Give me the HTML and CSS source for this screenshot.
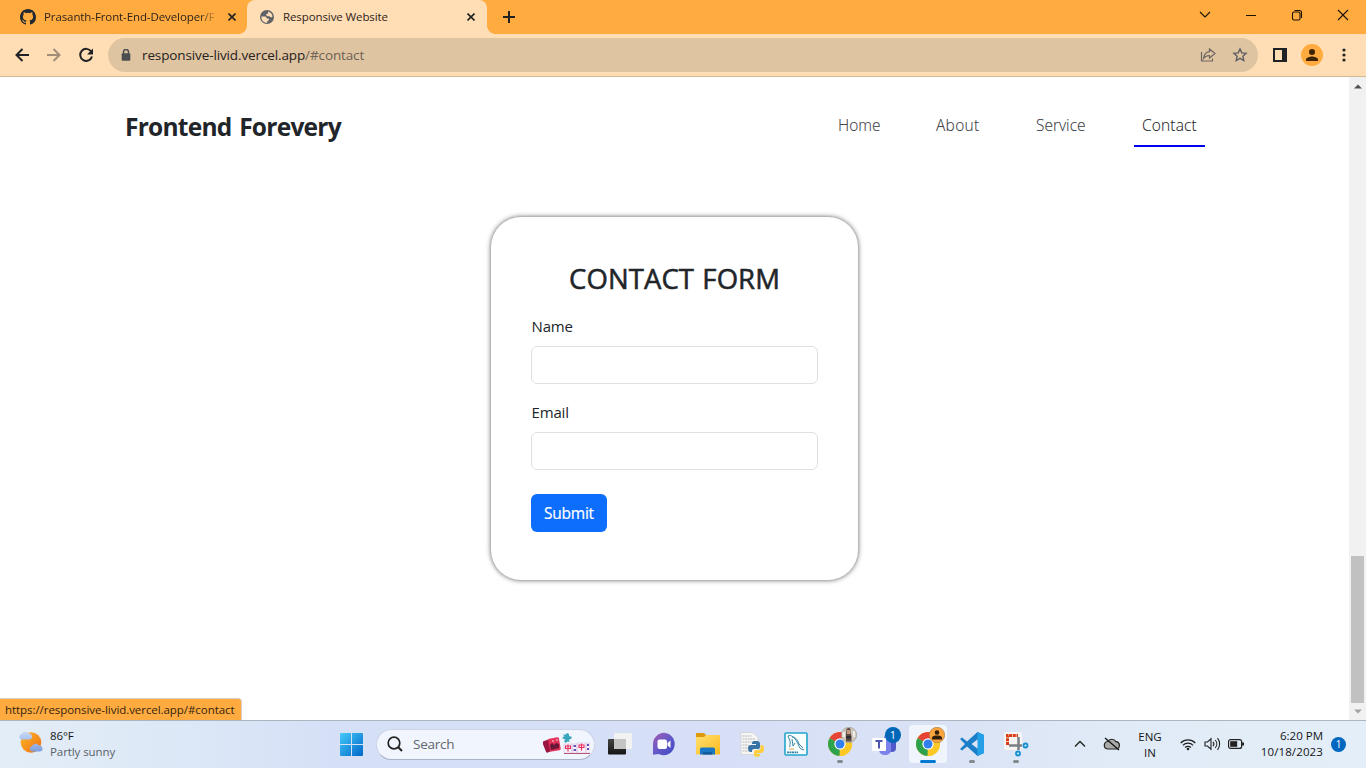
FILE: index.html
```html
<!DOCTYPE html>
<html lang="en">
<head>
<meta charset="utf-8">
<title>Responsive Website</title>
<link rel="stylesheet" href="styles.css">
</head>
<body>
<div class="tabs">
  <div class="tab">
    <svg class="fav" viewBox="0 0 16 16"><path fill="#24292f" d="M8 0C3.58 0 0 3.58 0 8c0 3.54 2.29 6.53 5.47 7.59.4.07.55-.17.55-.38 0-.19-.01-.82-.01-1.49-2.01.37-2.53-.49-2.69-.94-.09-.23-.48-.94-.82-1.13-.28-.15-.68-.52-.01-.53.63-.01 1.08.58 1.23.82.72 1.21 1.87.87 2.33.66.07-.52.28-.87.51-1.07-1.78-.2-3.64-.89-3.64-3.95 0-.87.31-1.59.82-2.15-.08-.2-.36-1.02.08-2.12 0 0 .67-.21 2.2.82a7.600 7.600 0 0 1 4 0c1.530-1.040 2.200-.82 2.200-.82.44 1.100.16 1.920.08 2.120.51.56.82 1.270.82 2.150 0 3.070-1.870 3.750-3.650 3.950.29.25.54.73.54 1.480 0 1.070-.01 1.930-.01 2.200 0 .21.15.46.55.38A8.010 8.010 0 0 0 16 8c0-4.420-3.580-8-8-8z"/></svg>
    <span class="title fade">Prasanth-Front-End-Developer/F</span>
    <svg class="x" viewBox="0 0 8 8"><path d="M.5.5l7 7M7.500.5l-7 7"/></svg>
  </div>
  <div class="tab active">
    <svg class="fav globe" viewBox="0 0 24 24"><circle cx="12" cy="12" r="12" fill="#5f6368"/><path fill="#ffddb5" d="M2.500 11h6c3 0 2.500 4 5 4h2v2c-1 1-3 1-3 3v1.800C6 22 1.800 17 2.500 11zM14 2.500c4 1 7 4.500 7.500 8.500-2 2.500-4 1.500-5-.5h-3.500c-2 0-3-2-2-3.500 1-1 3 0 3-2z"/></svg>
    <span class="title second">Responsive Website</span>
    <svg class="x" viewBox="0 0 8 8"><path d="M.5.5l7 7M7.500.5l-7 7"/></svg>
  </div>
  <svg class="plus" viewBox="0 0 12 12"><path d="M6 0v12M0 6h12" stroke="#222" stroke-width="2"/></svg>
  <svg class="wins" viewBox="0 0 150 14" fill="none" stroke="#1c1304" stroke-width="1.100"><path d="M1 4l5 5 5-5M47 7.500h10M139 2l10 10M149 2l-10 10"/><rect x="93.500" y="4" width="7.500" height="8" rx="1.500"/><path d="M95.500 2.500h5q2 0 2 2V10"/></svg>
</div>
<div class="toolbar">
  <svg class="navs" viewBox="0 0 80 16" fill="none" stroke="#202124" stroke-width="2"><path d="M15 8H2.500M8.500 2L2.500 8l6 6"/><path stroke="#a28e78" d="M33 8h12.500M39.500 2l6 6-6 6"/><path d="M77.200 4.500A6 6 0 1 0 78 9.500"/><path fill="#202124" stroke="none" d="M79 1.500v6h-6z"/></svg>
  <div class="omni">
    <svg class="lock" viewBox="0 0 10 12"><path fill="none" stroke="#4b4d51" stroke-width="1.500" d="M2.500 5V3a2.500 2.500 0 0 1 5 0v2"/><rect x=".7" y="4.300" width="8.600" height="7.400" rx="1" fill="#4b4d51"/></svg>
    <span class="url">responsive-livid.vercel.app<span class="path">/#contact</span></span>
    <svg class="share" viewBox="0 0 16 16" fill="none" stroke="#6b6560" stroke-width="1.200"><path d="M1.500 5v9h11v-2.500"/><path d="M9.500 2l5.500 4.500-5.500 4.500V8.500C6.500 8.500 5 9.500 3.500 11.500 4 7.500 6 5 9.500 4.600z"/></svg>
    <svg class="star" viewBox="0 0 16 16" fill="none" stroke="#5f6063" stroke-width="1.400"><path d="M8 1.900l1.800 4 4.300.4-3.200 2.900.9 4.300-3.800-2.200-3.800 2.200.9-4.300-3.200-2.900 4.300-.4z"/></svg>
  </div>
  <svg class="side" viewBox="0 0 14 14"><path fill="#202124" fill-rule="evenodd" d="M0 0h14v14H0zM2 2v10h7V2z"/></svg>
  <svg class="avatar" viewBox="0 0 22 22"><circle cx="11" cy="11" r="11" fill="#ffab40"/><circle cx="11" cy="8" r="3" fill="#3c2405"/><path fill="#3c2405" d="M5 17v-1.500c0-2 4-3 6-3s6 1 6 3V17z"/></svg>
  <svg class="dots" viewBox="0 0 4 14" fill="#202124"><circle cx="2" cy="2" r="1.600"/><circle cx="2" cy="7" r="1.600"/><circle cx="2" cy="12" r="1.600"/></svg>
</div>
<div class="view">
  <main class="page">
    <header class="header">
      <h1 class="brand">Frontend Forevery</h1>
      <nav class="menu"><a class="home">Home</a><a class="about">About</a><a class="service">Service</a><a class="contact">Contact</a></nav>
    </header>
    <form class="card">
      <h2 class="heading">CONTACT FORM</h2>
      <label class="label">Name</label>
      <input class="input" type="text">
      <label class="label">Email</label>
      <input class="input" type="text">
      <button class="submit" type="button">Submit</button>
    </form>
  </main>
  <div class="scroll">
    <svg class="arrow" viewBox="0 0 8 5"><path fill="#505050" d="M0 4.500L4 .5l4 4z"/></svg>
    <div class="thumb"></div>
    <svg class="arrow" viewBox="0 0 8 5"><path fill="#a3a3a3" d="M0 .5h8l-4 4z"/></svg>
  </div>
  <div class="status">https://responsive-livid.vercel.app/#contact</div>
</div>
<footer class="taskbar">
  <svg class="weather" viewBox="0 0 26 24"><defs><linearGradient id="sun" x2="1" y2="1"><stop stop-color="#fbb929"/><stop offset="1" stop-color="#ee6d12"/></linearGradient><linearGradient id="cl" x2="0" y2="1"><stop stop-color="#c8d9f8"/><stop offset="1" stop-color="#7f9fdb"/></linearGradient></defs><circle cx="13" cy="12.500" r="10.300" fill="url(#sun)"/><path fill="url(#cl)" d="M3.500 9.500a2.800 2.800 0 0 1 0-5.500 4 4 0 0 1 7-.5 3 3 0 0 1 1 6zM14 21.500a2.800 2.800 0 0 1 0-5.500 4 4 0 0 1 7-.5 3 3 0 0 1 1 6z"/></svg>
  <div class="temp"><span class="deg">86°F</span><span class="sky">Partly sunny</span></div>
  <svg class="start" viewBox="0 0 23 23"><defs><linearGradient id="win" x2="1" y2="1"><stop stop-color="#45cafa"/><stop offset="1" stop-color="#0067c8"/></linearGradient></defs><path fill="url(#win)" d="M0 1q0-1 1-1h10v11H0zM12 0h10q1 0 1 1v10H12zM0 12h11v11H1q-1 0-1-1zM12 12h11v10q0 1-1 1H12z"/></svg>
  <div class="search">
    <svg class="mag" viewBox="0 0 16 16" fill="none" stroke="#222"><circle cx="7" cy="7" r="5.800" stroke-width="1.700"/><path stroke-width="2" d="M11 11l4 4"/></svg>
    <span class="hint">Search</span>
    <svg class="games" viewBox="0 0 47 24"><rect x="1" y="8" width="9" height="12" rx="1.500" fill="#9b1742" transform="rotate(-22 5 14)"/><rect x="6" y="6" width="11" height="13" rx="1.500" fill="#df3159" transform="rotate(-10 11 13)"/><path d="M7 13l2-2 2 2 2-2 3 1v4l-8 2z" fill="#681635"/><path d="M9 9h2M13 8h2" stroke="#ffd4d4"/><path d="M20 2l2 1 2-2 2 1v2l3 1-1 2-2 .5.5 2.500-2-.5-2 1.500-1.500-2 1.500-1.500-3-1 .5-2 1.500.5z" fill="#39a7bb"/><g stroke="#d4bfe1" stroke-width=".6"><path fill="#faf2fb" d="M21 12h8v9h-8zM29 12h5v9h-5zM34 11h9v10h-9zM43 11h4v10h-4z"/></g><path d="M21 21.500h26" stroke="#b55674"/><path d="M22.500 14h5v2.500h-5zM25 12.500v7M36 13h5v2.500h-5zM38.500 11.500v7" fill="none" stroke="#e72d58" stroke-width="1.100"/><path d="M30.500 14h2.500M30.500 18h2.500M44 13h2M44 17h2" stroke="#6451b3" stroke-width="1.800"/></svg>
  </div>
  <div class="apps">
    <div class="app"><svg viewBox="0 0 24 24"><defs><linearGradient id="dk" x2="0" y2="1"><stop stop-color="#444"/><stop offset="1" stop-color="#151515"/></linearGradient></defs><rect y="7" width="18" height="15.500" rx="1" fill="url(#dk)"/><rect x="6" y="1" width="18" height="16" rx="1" fill="#f2f2f2"/><path fill="#c4c4c4" d="M6 7h12v10H6z"/></svg></div>
    <div class="app"><svg viewBox="0 0 24 24"><defs><linearGradient id="vi" x2="1" y2="1"><stop stop-color="#a45db4"/><stop offset=".5" stop-color="#6559c7"/><stop offset="1" stop-color="#3e48c4"/></linearGradient></defs><path fill="url(#vi)" d="M12 .8A11.200 11.200 0 1 1 6.500 22L1 22.800V12A11.200 11.200 0 0 1 12 .8z"/><rect x="5.500" y="7.500" width="9.500" height="9.500" rx="2" fill="#fff"/><path fill="#fff" d="M15.500 11l3-2.500v7.500l-3-2.500z"/></svg></div>
    <div class="app"><svg viewBox="0 0 24 24"><defs><linearGradient id="fo" x2="1" y2="1"><stop stop-color="#ffe071"/><stop offset="1" stop-color="#fbbb1e"/></linearGradient></defs><path fill="#dd980c" d="M0 2q0-1 1-1h7l2 2h13v4H0z"/><path fill="url(#fo)" d="M0 5h8l2-2h13q1 0 1 1v18.500H0z"/><path fill="#1977c4" d="M4 22.500V17q0-1.500 1.500-1.500h12Q19 15.500 19 17v5.500z"/><path fill="#0f5b9d" d="M7 20h9v2.500H7z"/></svg></div>
    <div class="app"><svg viewBox="0 0 24 24"><path fill="#f5f5f5" stroke="#c9c9c9" stroke-width=".6" d="M1 .5h12l5 5v17H1z"/><path stroke="#bbb" stroke-dasharray="2 .6" d="M2.500 4h9M2.500 7h13M2.500 10h9M2.500 13h6M2.500 16h6M2.500 19h8"/><path fill="#3872a4" d="M14 9h3q3 0 3 3v3q0 2-2 2h-4q-2 0-2 2v1h-1q-3 0-3-4 0-3 3-3h5v-1h-4v-1q0-2 2-2z"/><path fill="#ffce3d" d="M20.500 13h1q2.500 0 2.500 4t-3 4h-4v1h3v1q0 1.800-3 1.800t-3-2V20q0-2 2-2h3q1.500 0 1.500-2z"/></svg></div>
    <div class="app"><svg viewBox="0 0 24 24"><rect x="1" y="1" width="22" height="22" rx="1" fill="#f7fcfd" stroke="#21a5cd" stroke-width="1.600"/><path fill="none" stroke="#287a9c" stroke-width=".9" d="M6 15c-1-2 1-3 0-6L4 4c3-2 7 2 9 6 2 3 2 6 4 7l3 1M8 5c4 0 6 4 7 7l4 4M8 7l1 7 2-3"/><path stroke="#3483a6" d="M3 20.300h11" stroke-width="1.800" stroke-dasharray="2 .5"/><path stroke="#e8a348" d="M5 17h5"/></svg></div>
    <div class="app"><svg viewBox="0 0 24 24"><g id="chrome"><circle cx="12" cy="12" r="12" fill="#fcc825"/><path fill="#e54335" d="M12 12L1.600 6A12 12 0 0 1 22.400 6z"/><path fill="#2da14c" d="M12 12L1.600 6A12 12 0 0 0 11.500 24l5.500-9z"/><path fill="#fcc825" d="M12 12V6.500h10.700A12 12 0 0 1 11.500 24z"/><circle cx="12" cy="12" r="5.700" fill="#fff"/><circle cx="12" cy="12" r="4.500" fill="#3280ee"/></g></svg>
      <svg class="mini" viewBox="0 0 16 16"><circle cx="8" cy="8" r="7.700" fill="#d0c8bd" stroke="#9c9488" stroke-width=".6"/><path fill="#5b4b42" d="M5.500 2q2.500-2 4 0v4l1 3v5.500H5V8z"/><path fill="#c69a80" d="M6 3h3v4H6z"/><path fill="#303030" d="M5 9h5v2.500H5z"/><path fill="#efede9" d="M1.500 5h2.500v5H1.500zM12 4h2v6h-2z"/></svg><i class="run"></i></div>
    <div class="app"><svg viewBox="0 0 24 24"><circle cx="16" cy="6" r="4" fill="#7b83eb"/><path fill="#5059c9" d="M16 9h8v7q0 4-4 4t-4-4z"/><path fill="#7b83eb" d="M7 9h12v8q0 6-6 6t-6-6z"/><rect y="6" width="14" height="13" rx="1" fill="#fff"/><path stroke="#4e55b2" stroke-width="2" d="M3.500 9h7M7 9v7.500"/></svg><span class="mini count">1</span></div>
    <div class="app on"><svg viewBox="0 0 24 24"><use href="#chrome"/></svg>
      <svg class="mini" viewBox="0 0 16 16"><circle cx="8" cy="8" r="7.700" fill="#fba53b" stroke="#9c774b" stroke-width=".6"/><circle cx="8" cy="5.500" r="2.300" fill="#30200b"/><path fill="#30200b" d="M3 12.500V11c0-2 3-2.500 5-2.500s5 .5 5 2.500v1.500z"/></svg><i class="run wide"></i></div>
    <div class="app"><svg viewBox="0 0 24 24"><path fill="#1a7fc8" fill-rule="evenodd" d="M17.500 0L24 3v18l-6.500 3L7 14.500 2 18.500 0 17l5-5-5-5 2-1.500 5 4zM18 7l-6.500 5 6.500 5z"/><path fill="#23a0e8" d="M17.500 0L24 3v18l-6.500 3z"/></svg><i class="run"></i></div>
    <div class="app"><svg viewBox="0 0 24 24"><rect x="0" y="0" width="18" height="18" rx="2" fill="#f7f5f4"/><path fill="none" stroke="#d83b16" stroke-width="3" stroke-dasharray="3 .7" d="M3.500 13V3.500h10.500"/><path fill="none" stroke="#7b7e83" stroke-width="2.500" d="M14.500 5v13M5 13.500h13"/><g fill="#c8f1ff" stroke="#168ed0" stroke-width="1.800"><circle cx="21.500" cy="13.500" r="2"/><circle cx="14" cy="21.500" r="2"/></g></svg><i class="run"></i></div>
  </div>
  <svg class="up" viewBox="0 0 12 8" fill="none" stroke="#222" stroke-width="1.400"><path d="M1 6.500l5-5 5 5"/></svg>
  <svg class="cloud" viewBox="0 0 18 14"><path fill="#aaa" stroke="#222" stroke-width="1.200" d="M4.500 12a3.800 3.800 0 0 1 0-7.500A5 5 0 0 1 13 4.700a3.700 3.700 0 0 1 .5 7.300z"/><path d="M2 1l14 12" stroke="#111" stroke-width="1.300"/></svg>
  <div class="lang"><span>ENG</span><span>IN</span></div>
  <svg class="wifi" viewBox="0 0 16 13" fill="none" stroke="#222" stroke-width="1.200"><path d="M.7 5a10.300 10.300 0 0 1 14.600 0M2.900 7.300a7.200 7.200 0 0 1 10.200 0M5.100 9.500a4.100 4.100 0 0 1 5.800 0"/><circle cx="8" cy="11" r="1.300" fill="#222" stroke="none"/></svg>
  <svg class="vol" viewBox="0 0 17 14" fill="none" stroke="#222" stroke-width="1.100"><path d="M1 5h2.500L7 1.800v10.400L3.500 9H1zM9 4.800a3.500 3.500 0 0 1 0 4.400M11.200 3a6 6 0 0 1 0 8M13.500 1.200a9 9 0 0 1 0 11.600"/></svg>
  <svg class="bat" viewBox="0 0 17 10"><rect x=".6" y=".6" width="13" height="8.800" rx="2" fill="none" stroke="#222" stroke-width="1.200"/><rect x="2.200" y="2.200" width="7" height="5.600" fill="#222"/><path d="M15 3.500v3" stroke="#222" stroke-width="2"/></svg>
  <div class="clock"><span>6:20 PM</span><span class="date">10/18/2023</span></div>
  <div class="bell">1</div>
</footer>
</body>
</html>
```
FILE: styles.css
```css
* { box-sizing: border-box; }
body { margin: 0; width: 1366px; height: 768px; overflow: hidden; display: flex; flex-direction: column; font-family: "Open Sans", "Noto Sans", sans-serif; color: #212529; background: #fff; }
svg { display: block; flex: none; }
span { white-space: nowrap; }

.tabs { height: 34px; flex: none; display: flex; align-items: center; background: #ffab40; }
.tab { position: relative; width: 247px; height: 34px; display: flex; align-items: center; padding-left: 20px; }
.tab.active { width: 240px; padding-left: 12px; background: #ffddb5; border-radius: 8px 8px 0 0; }
.tab.active::before, .tab.active::after { content: ""; position: absolute; bottom: 0; width: 8px; height: 8px; }
.tab.active::before { left: -8px; background: radial-gradient(circle at 0 0, #ffab40 7.5px, #ffddb5 8px); }
.tab.active::after { right: -8px; background: radial-gradient(circle at 100% 0, #ffab40 7.5px, #ffddb5 8px); }
.fav { width: 16px; height: 16px; margin-right: 8px; }
.globe { width: 14px; height: 14px; margin: 0 9px 0 1px; }
.title { width: 176px; margin-right: 8px; padding-bottom: 2px; font-size: 11.5px; letter-spacing: -0.1px; color: #2e241a; }
.fade { -webkit-mask-image: linear-gradient(90deg, #000 155px, transparent 175px); }
.x { width: 8px; height: 8px; stroke: #222; stroke-width: 1.6; }
.plus { width: 12px; height: 12px; margin-left: 16px; }
.wins { width: 150px; height: 14px; margin: -5px 0 0 684px; }

.toolbar { height: 43px; flex: none; display: flex; align-items: center; background: #ffddb5; border-bottom: 1px solid #d4b893; padding-left: 14px; }
.navs { width: 80px; height: 16px; }
.omni { width: 1150px; height: 34px; margin-left: 14px; border-radius: 17px; background: #dfc4a1; display: flex; align-items: center; padding-left: 13px; }
.lock { width: 10px; height: 12px; }
.url { width: 1068px; margin-left: 11px; font-size: 13.5px; letter-spacing: -0.12px; color: #25211c; }
.path { color: #6e6255; }
.share { width: 16px; height: 16px; margin-left: -10px; }
.star { width: 16px; height: 16px; margin-left: 16px; }
.side { width: 14px; height: 14px; margin-left: 15px; }
.avatar { width: 22px; height: 22px; margin-left: 14px; }
.dots { width: 4px; height: 14px; margin-left: 19px; }

.view { position: relative; flex: 1; min-height: 0; display: flex; }
.page { width: 1349px; }
.header { height: 70px; display: flex; align-items: flex-end; justify-content: space-between; padding: 0 144px 0 125px; }
.brand { margin: 0 0 1px; font-size: 24.5px; font-weight: 700; line-height: 38px; letter-spacing: -0.75px; word-spacing: 2px; }
.menu { display: flex; }
.menu a { height: 38px; padding: 4px 8px 0; border-bottom: 2px solid transparent; margin-left: 40px; font-size: 15.5px; line-height: 24px; font-weight: 300; color: #35393e; -webkit-text-stroke: 0.1px; white-space: nowrap; }
.menu .home { width: 59px; }
.menu .about { width: 60px; margin-left: 39px; letter-spacing: 0.3px; }
.menu .service { width: 66px; }
.menu .contact { width: 71px; margin-left: 40px; letter-spacing: 0.15px; color: #1c1c1c; border-color: #0000f0; }
.card { width: 367px; height: 363px; margin: 70px 0 0 491px; padding: 45px 40px 0; border-radius: 30px; box-shadow: 0 0 5px #555; display: flex; flex-direction: column; }
.heading { margin: 0 0 18px; text-align: center; font-size: 27.5px; font-weight: 500; line-height: 34px; letter-spacing: 0.1px; word-spacing: 1px; -webkit-text-stroke: 0.55px #212529; white-space: nowrap; }
.label { padding-left: 0.5px; font-size: 15px; line-height: 24px; margin-bottom: 8px; letter-spacing: -0.15px; }
.input { width: 287px; height: 38px; margin: 0 0 16px; border: 1px solid #dee2e6; border-radius: 6px; background: #fff; }
.submit { width: 76px; height: 38px; margin-top: 8px; padding: 0; border: 0; border-radius: 6px; background: #0d6efd; color: #fff; font: 15.5px "Open Sans", sans-serif; letter-spacing: -0.25px; -webkit-text-stroke: 0.2px #fff; }
.scroll { width: 17px; background: #f1f1f1; display: flex; flex-direction: column; align-items: center; padding: 7px 0 6px; }
.arrow { width: 8px; height: 5px; }
.thumb { width: 13px; height: 147px; margin: auto 0 6px; background: #c1c1c1; }
.status { position: absolute; left: 0; bottom: 0; width: 242px; height: 22px; padding-left: 5px; border-top: 1px solid #d8d0c5; border-right: 1px solid #d8d0c5; border-radius: 0 4px 0 0; background: #ffab40; font-size: 11.5px; line-height: 21px; letter-spacing: -0.06px; color: #33240f; white-space: nowrap; }

.taskbar { height: 48px; flex: none; display: flex; align-items: center; padding-bottom: 1px; border-top: 1px solid #afb5c0; background: linear-gradient(90deg, #e3edf7 0, #dfeaf7 120px, #d5e0f7 340px, #d6dff6 700px, #d9e2f5 930px, #e1ebf7 1120px, #e3eef8 100%); }
.weather { width: 26px; height: 24px; margin: -4px 0 0 18px; }
.temp { width: 288px; margin: 0 0 0 6px; display: flex; flex-direction: column; font-size: 11.5px; line-height: 16px; letter-spacing: -0.08px; }
.deg { color: #151515; }
.sky { color: #5a6068; }
.start { width: 23px; height: 23px; margin-left: 2px; }
.search { width: 219px; height: 31px; margin-left: 13px; border-radius: 16px; background: #f1f5fd; border: 1px solid #ccd5e8; border-bottom-color: #a9b3c7; display: flex; align-items: center; }
.mag { width: 16px; height: 16px; margin-left: 10px; }
.hint { width: 122px; margin-left: 10px; font-size: 13.5px; letter-spacing: -0.25px; color: #62656b; }
.games { width: 47px; height: 24px; margin: -1px 0 0 8px; }
.apps { display: flex; margin-left: 3px; }
.app { position: relative; width: 44px; height: 47px; display: flex; align-items: center; justify-content: center; }
.app > svg:first-child { width: 24px; height: 24px; overflow: visible; }
.app.on::before { content: ""; position: absolute; left: 3px; top: 4px; width: 38px; height: 38px; border-radius: 4px; background: #f0f4fc; }
.app.on > svg { position: relative; }
.app .mini, .app.on .mini { position: absolute; right: 5px; top: 6px; width: 16px; height: 16px; }
.count { border-radius: 50%; background: #0067b8; color: #fff; font-size: 11px; line-height: 16px; text-align: center; }
.run { position: absolute; left: 19px; bottom: 5px; width: 6px; height: 3px; border-radius: 2px; background: #85898f; }
.wide { left: 14px; width: 16px; background: #0078d4; }
.up { width: 12px; height: 8px; margin-left: 36px; }
.cloud { width: 18px; height: 14px; margin-left: 17px; }
.lang, .clock { display: flex; flex-direction: column; font-size: 11.5px; line-height: 16px; color: #151515; }
.lang { width: 30px; margin: 1px 0 0 14px; align-items: center; }
.wifi { width: 16px; height: 13px; margin-left: 15px; }
.vol { width: 17px; height: 14px; margin-left: 8px; }
.bat { width: 17px; height: 10px; margin-left: 7px; }
.clock { width: 70px; margin: 0 0 0 8px; align-items: flex-end; }
.date { letter-spacing: 0.12px; }
.bell { width: 15px; height: 15px; margin-left: 8px; border-radius: 50%; background: #0067c0; color: #fff; font-size: 10px; line-height: 15px; text-align: center; }
```
